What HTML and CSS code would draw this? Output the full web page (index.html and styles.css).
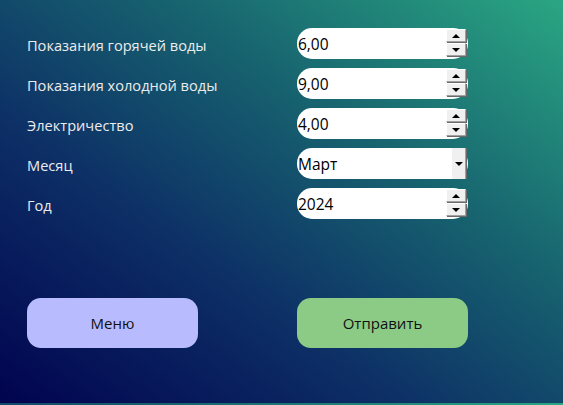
FILE: index.html
```html
<!DOCTYPE html>
<html lang="ru">
<head>
<meta charset="utf-8">
<link rel="stylesheet" href="styles.css">
</head>
<body>
<main class="page">
  <div class="form">
    <div class="row">
      <span class="label">Показания горячей воды</span>
      <div class="field"><span class="value">6,00</span><span class="spin"><span class="btn up"></span><span class="btn down"></span></span></div>
    </div>
    <div class="row">
      <span class="label">Показания холодной воды</span>
      <div class="field"><span class="value">9,00</span><span class="spin"><span class="btn up"></span><span class="btn down"></span></span></div>
    </div>
    <div class="row">
      <span class="label">Электричество</span>
      <div class="field"><span class="value">4,00</span><span class="spin"><span class="btn up"></span><span class="btn down"></span></span></div>
    </div>
    <div class="row">
      <span class="label">Месяц</span>
      <div class="field select"><span class="value">Март</span><span class="drop"><span class="tri"></span></span></div>
    </div>
    <div class="row">
      <span class="label">Год</span>
      <div class="field"><span class="value">2024</span><span class="spin"><span class="btn up"></span><span class="btn down"></span></span></div>
    </div>
  </div>
  <div class="actions">
    <button class="action menu">Меню</button>
    <button class="action send">Отправить</button>
  </div>
</main>
</body>
</html>
```
FILE: styles.css
```css
html {
  height: 100%;
  background: linear-gradient(to top right, #01034f 0%, #0d2f66 35%, #17636f 65%, #2aa682 100%);
  background-size: 563px 403px;
}
body {
  margin: 0;
  font-family: "Open Sans", "Noto Sans", sans-serif;
}
.page {
  padding: 28px 0 0 27px;
  height: 403px;
  box-sizing: border-box;
}
.form {
  display: flex;
  flex-direction: column;
  gap: 9px;
}
.row {
  display: grid;
  grid-template-columns: 270px 171px;
  align-items: center;
  height: 31px;
}
.label {
  color: #ececec;
  font-size: 14.6px;
  position: relative;
  top: 1px;
}
.field {
  height: 31px;
  background: #fff;
  border-radius: 15px;
  display: flex;
  align-items: center;
  justify-content: space-between;
  padding-left: 1px;
  padding-right: 2px;
  box-sizing: border-box;
}
.value {
  font-size: 15.5px;
  color: #000;
}
.spin {
  display: flex;
  flex-direction: column;
  gap: 1px;
  align-self: flex-start;
  margin-top: 1px;
}
.btn {
  width: 20px;
  background: #f0f0f0;
  border-top: 1px solid #fff;
  border-left: 1px solid #fff;
  border-right: 1px solid #a0a0a0;
  border-bottom: 1px solid #a0a0a0;
  box-shadow: 1px 1px 0 #696969;
  box-sizing: border-box;
  height: 13px;
  display: flex;
  align-items: center;
  justify-content: center;
}
.btn::after {
  content: "";
  width: 0;
  height: 0;
  border-left: 4px solid transparent;
  border-right: 4px solid transparent;
}
.up::after { border-bottom: 4px solid #000; }
.down::after { border-top: 4px solid #000; }
.drop {
  align-self: stretch;
  width: 13px;
  background: #f0f0f0;
  border-left: 1px solid #fff;
  border-right: 1px solid #a0a0a0;
  box-shadow: 1px 0 0 #696969;
  display: flex;
  align-items: center;
  justify-content: center;
}
.tri {
  width: 0;
  height: 0;
  border-left: 4px solid transparent;
  border-right: 4px solid transparent;
  border-top: 4px solid #000;
}
.actions {
  display: grid;
  grid-template-columns: 171px 171px;
  column-gap: 99px;
  margin-top: 79px;
}
.action {
  height: 50px;
  border: none;
  border-radius: 14px;
  font-family: "Open Sans", "Noto Sans", sans-serif;
  font-size: 15px;
  color: #111;
}
.menu { background: #b8bcfe; }
.send { background: #8bcb86; }
```
